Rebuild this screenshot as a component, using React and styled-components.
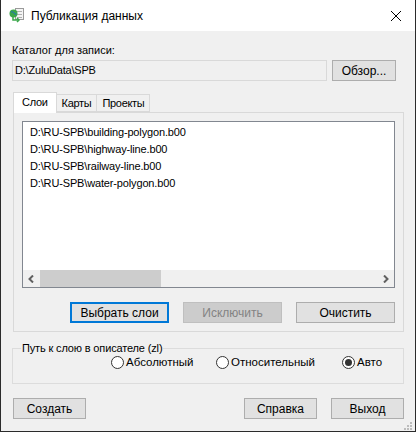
import React from "react";
import styled, { createGlobalStyle, css } from "styled-components";

const GlobalStyle = createGlobalStyle`
  html, body {
    margin: 0;
    padding: 0;
    background: #ffffff;
  }
  * {
    box-sizing: border-box;
  }
  body {
    font-family: "Liberation Sans", Arial, sans-serif;
    font-size: 11px;
    color: #000;
  }
`;

const Window = styled.div`
  width: 416px;
  height: 432px;
  display: flex;
  flex-direction: column;
  border: 1px solid #2b2b2b;
  border-top: none;
  background: #f0f0f0;
  position: relative;
`;

const TitleBar = styled.div`
  height: 31px;
  background: #ffffff;
  display: flex;
  align-items: center;
  padding: 0 0 0 7px;
`;

const TitleText = styled.span`
  margin-left: 6px;
  font-size: 12px;
  flex: 1;
`;

const CloseBox = styled.div`
  width: 46px;
  height: 31px;
  display: flex;
  align-items: center;
  justify-content: center;
  margin-right: -4px;
`;

const Body = styled.div`
  flex: 1;
  display: flex;
  flex-direction: column;
  padding: 0 11px;
`;

const Label = styled.div`
  margin-top: 12px;
  line-height: 15px;
`;

const PathRow = styled.div`
  display: flex;
  align-items: flex-start;
  margin-top: 2px;
  gap: 5px;
  padding-right: 8px;
`;

const TextBox = styled.div`
  flex: 1;
  height: 21px;
  border: 1px solid #d9d9d9;
  background: #f0f0f0;
  padding: 2px 2px;
  line-height: 15px;
  letter-spacing: -0.2px;
`;

const Button = styled.button`
  font-family: inherit;
  font-size: 12px;
  height: 21px;
  width: ${(p) => p.$w || 75}px;
  padding: 0;
  background: #e1e1e1;
  border: 1px solid #adadad;
  color: #000;
  ${(p) =>
    p.$default &&
    css`
      border: 2px solid #0078d7;
    `}
  ${(p) =>
    p.disabled &&
    css`
      background: #cccccc;
      border-color: #bfbfbf;
      color: #838383;
    `}
`;

const Tabs = styled.div`
  margin-top: 11px;
  display: flex;
  flex-direction: column;
`;

const TabStrip = styled.div`
  display: flex;
  align-items: flex-end;
  height: 20px;
  padding-left: 1px;
  position: relative;
  z-index: 1;
`;

const Tab = styled.div`
  height: ${(p) => (p.$active ? 21 : 18)}px;
  padding: ${(p) => (p.$active ? "2px 8px 0" : "1px 5px 0")};
  margin-bottom: ${(p) => (p.$active ? -1 : 0)}px;
  border: 1px solid #d9d9d9;
  border-bottom: ${(p) => (p.$active ? "none" : "1px solid #d9d9d9")};
  border-left: ${(p) => (p.$first || p.$active ? "1px solid #d9d9d9" : "none")};
  background: ${(p) => (p.$active ? "#ffffff" : "#f0f0f0")};
  line-height: 15px;
  letter-spacing: -0.3px;
`;

const TabPanel = styled.div`
  border: 1px solid #d9d9d9;
  background: #f0f0f0;
  padding: 8px;
  margin-left: 1px;
  display: flex;
  flex-direction: column;
`;

const ListBox = styled.div`
  height: 167px;
  border: 1px solid #828790;
  background: #ffffff;
  display: flex;
  flex-direction: column;
`;

const Items = styled.div`
  flex: 1;
  padding: 2px 0 0 7px;
`;

const Item = styled.div`
  height: 17px;
  line-height: 17px;
  white-space: nowrap;
  letter-spacing: -0.15px;
`;

const HScroll = styled.div`
  height: 17px;
  display: flex;
  background: #f0f0f0;
`;

const Arrow = styled.div`
  width: 17px;
  height: 17px;
  display: flex;
  align-items: center;
  justify-content: center;
`;

const Track = styled.div`
  flex: 1;
  display: flex;
  align-items: stretch;
`;

const Thumb = styled.div`
  width: 121px;
  background: #cdcdcd;
`;

const ButtonRow = styled.div`
  display: flex;
  justify-content: flex-end;
  gap: 14px;
  margin-top: 14px;
`;

const Group = styled.fieldset`
  margin: 9px 0 0 0;
  padding: 0 0 0 98px;
  border: 1px solid #dcdcdc;
  border-radius: 0;
  display: flex;
  align-items: flex-start;
  height: 43px;
  min-width: 0;
`;

const Legend = styled.legend`
  padding: 0 1px;
  margin-left: -90px;
  line-height: 14px;
  letter-spacing: -0.15px;
`;

const Radio = styled.label`
  display: flex;
  align-items: center;
  gap: 2px;
  line-height: 15px;
  font-size: 11.5px;
  width: ${(p) => (p.$w ? `${p.$w}px` : "auto")};
`;

const Circle = styled.span`
  width: 13px;
  height: 13px;
  flex: none;
  border-radius: 50%;
  border: 1px solid #333333;
  background: #ffffff;
  display: flex;
  align-items: center;
  justify-content: center;
  &::after {
    content: "";
    display: ${(p) => (p.$checked ? "block" : "none")};
    width: 7px;
    height: 7px;
    border-radius: 50%;
    background: #333333;
  }
`;

const Footer = styled.div`
  display: flex;
  gap: 14px;
  margin-top: 14px;
  padding-left: 1px;
`;

const Spacer = styled.div`
  flex: 1;
`;

const Grip = styled.div`
  position: absolute;
  right: 3px;
  bottom: 3px;
  width: 8px;
  height: 8px;
`;

const AppIcon = () => (
  <svg width="17" height="17" viewBox="0 0 17 17">
    <rect x="7.5" y="1.5" width="8" height="11" fill="#f4f4f4" stroke="#9a9a9a" />
    <line x1="9" y1="4.5" x2="14" y2="4.5" stroke="#b0b0b0" />
    <line x1="9" y1="7.5" x2="14" y2="7.5" stroke="#b0b0b0" />
    <line x1="9" y1="10.5" x2="14" y2="10.5" stroke="#b0b0b0" />
    <circle cx="5.5" cy="6.5" r="4" fill="#3aa64a" />
    <path d="M3 5 Q5 4 6 6 T8.5 7" stroke="#1f6fbf" strokeWidth="1" fill="none" />
    <path d="M5 10 L5 13 L10 13" stroke="#3aa64a" strokeWidth="1.5" fill="none" />
    <path d="M9 11 L11 13 L9 15" stroke="#3aa64a" strokeWidth="1.5" fill="none" />
  </svg>
);

const CloseIcon = () => (
  <svg width="10" height="10" viewBox="0 0 10 10">
    <path d="M0 0 L10 10 M10 0 L0 10" stroke="#000" strokeWidth="1" />
  </svg>
);

const Chevron = ({ dir }) => (
  <svg width="7" height="8" viewBox="0 0 7 8">
    {dir === "left" ? (
      <path d="M5 0.5 L1.5 4 L5 7.5" stroke="#606060" strokeWidth="2" fill="none" />
    ) : (
      <path d="M2 0.5 L5.5 4 L2 7.5" stroke="#606060" strokeWidth="2" fill="none" />
    )}
  </svg>
);

const GripIcon = () => (
  <svg width="8" height="8" viewBox="0 0 8 8">
    {[
      [6, 0],
      [6, 3],
      [3, 3],
      [6, 6],
      [3, 6],
      [0, 6],
    ].map(([x, y]) => (
      <rect key={`${x}-${y}`} x={x} y={y} width="2" height="2" fill="#bcbcbc" />
    ))}
  </svg>
);

const layers = [
  "D:\\RU-SPB\\building-polygon.b00",
  "D:\\RU-SPB\\highway-line.b00",
  "D:\\RU-SPB\\railway-line.b00",
  "D:\\RU-SPB\\water-polygon.b00",
];

export default function App() {
  return (
    <>
      <GlobalStyle />
      <Window>
        <TitleBar>
          <AppIcon />
          <TitleText>Публикация данных</TitleText>
          <CloseBox>
            <CloseIcon />
          </CloseBox>
        </TitleBar>
        <Body>
          <Label>Каталог для записи:</Label>
          <PathRow>
            <TextBox>D:\ZuluData\SPB</TextBox>
            <Button $w={64}>Обзор...</Button>
          </PathRow>

          <Tabs>
            <TabStrip>
              <Tab $active $first>Слои</Tab>
              <Tab>Карты</Tab>
              <Tab>Проекты</Tab>
            </TabStrip>
            <TabPanel>
              <ListBox>
                <Items>
                  {layers.map((l) => (
                    <Item key={l}>{l}</Item>
                  ))}
                </Items>
                <HScroll>
                  <Arrow>
                    <Chevron dir="left" />
                  </Arrow>
                  <Track>
                    <Thumb />
                  </Track>
                  <Arrow>
                    <Chevron dir="right" />
                  </Arrow>
                </HScroll>
              </ListBox>
              <ButtonRow>
                <Button $w={99} $default>Выбрать слои</Button>
                <Button $w={99} disabled>Исключить</Button>
                <Button $w={99}>Очистить</Button>
              </ButtonRow>
            </TabPanel>
          </Tabs>

          <Group>
            <Legend>Путь к слою в описателе (zl)</Legend>
            <Radio $w={105}>
              <Circle />
              Абсолютный
            </Radio>
            <Radio $w={126}>
              <Circle />
              Относительный
            </Radio>
            <Radio>
              <Circle $checked />
              Авто
            </Radio>
          </Group>

          <Footer>
            <Button $w={73}>Создать</Button>
            <Spacer />
            <Button $w={73}>Справка</Button>
            <Button $w={73}>Выход</Button>
          </Footer>
        </Body>
        <Grip>
          <GripIcon />
        </Grip>
      </Window>
    </>
  );
}
